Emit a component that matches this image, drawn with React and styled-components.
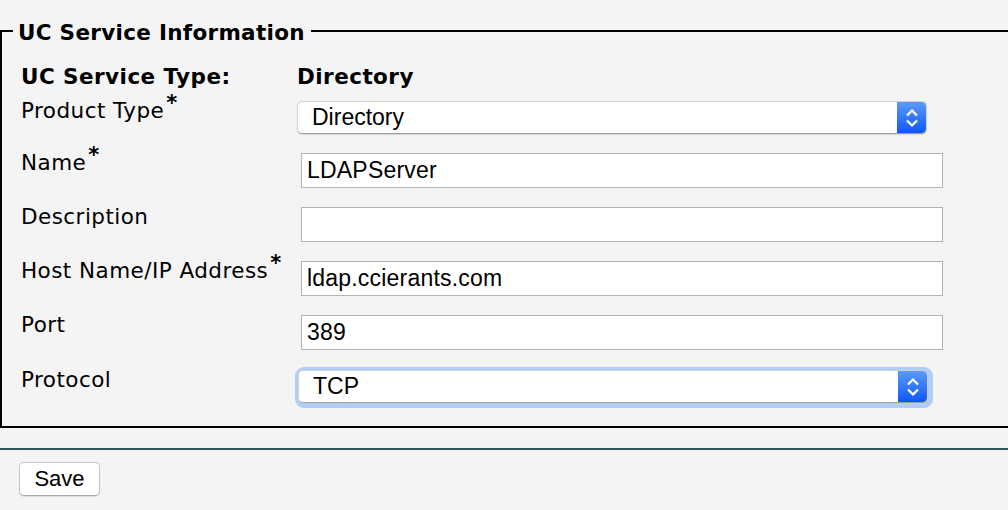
import React from 'react'
import styled, { createGlobalStyle } from 'styled-components'

const GlobalStyle = createGlobalStyle`
    html, body {
        margin: 0;
        padding: 0;
        background: #f4f4f4;
        overflow: hidden;
    }
    body {
        font-family: "DejaVu Sans", Verdana, sans-serif;
        color: #000;
    }
`

const Page = styled.div`
    width: 1008px;
    height: 510px;
    padding-top: 16px;
    box-sizing: border-box;
`

const Fieldset = styled.fieldset`
    margin: 0;
    padding: 21px 0 24px 0;
    border: 2px solid #000;
    border-right: none;
    min-width: 0;
`

const Legend = styled.legend`
    margin-left: 11px;
    padding: 4px 6px 0 5px;
    font-size: 21.5px;
    font-weight: bold;
    letter-spacing: 0.3px;
    line-height: 26px;
`

const Rows = styled.div`
    display: flex;
    flex-direction: column;
    padding-left: 19px;
`

const Row = styled.div`
    display: grid;
    grid-template-columns: 276px 1fr;
    align-items: start;
    height: ${p => p.$h}px;
`

const Label = styled.div`
    font-size: 21.5px;
    line-height: 20px;
    letter-spacing: 0.45px;
    font-weight: ${p => (p.$bold ? 'bold' : 'normal')};
    white-space: nowrap;
`

const Star = styled.span`
    position: relative;
    top: -8px;
    font-size: 21px;
    font-weight: bold;
    margin-left: 2px;
`

const TextInput = styled.div`
    margin-left: 4px;
    width: 642px;
    height: 35px;
    box-sizing: border-box;
    border: 1px solid #b3b3b3;
    background: #fff;
    padding: 0 5px;
    font-family: "Liberation Sans", Arial, sans-serif;
    font-size: 23px;
    letter-spacing: 0.2px;
    line-height: 33px;
`

const Select = styled.div`
    display: flex;
    width: 630px;
    height: 33px;
    box-sizing: border-box;
    border-radius: 5px;
    background: #fff;
    border: 1px solid #cfcfcf;
    border-bottom-color: #9d9d9d;
    box-shadow: ${p => (p.$focused ? '1px 1px 0 4px #b0cdf5' : '0 1px 1px rgba(0,0,0,0.12)')};
    margin-left: ${p => (p.$focused ? '1px' : '0')};
    overflow: hidden;
    font-family: "Liberation Sans", Arial, sans-serif;
    font-size: 23px;
`

const SelectValue = styled.div`
    flex: 1;
    padding-left: 14px;
    line-height: 31px;
`

const Stepper = styled.div`
    width: 29px;
    display: flex;
    align-items: center;
    justify-content: center;
    background: linear-gradient(#5b9bfb, #0f57f6);
    border-radius: 0 4px 4px 0;
`

const Divider = styled.div`
    margin-top: 20px;
    height: 2px;
    background: #2e5656;
`

const Footer = styled.div`
    padding: 12px 0 0 19px;
`

const Button = styled.button`
    width: 81px;
    height: 34px;
    border: 1px solid #c4c4c4;
    border-bottom-color: #a8a8a8;
    border-radius: 5px;
    background: #fff;
    box-shadow: 0 1px 1px rgba(0,0,0,0.1);
    font-family: "Liberation Sans", Arial, sans-serif;
    font-size: 22px;
    color: #000;
    padding: 0;
`

const Arrows = () => (
    <svg width="14" height="20" viewBox="0 0 14 20">
        <path d="M2 7.5 L7 2.5 L12 7.5" fill="none" stroke="#fff" strokeWidth="2.2" />
        <path d="M2 12.5 L7 17.5 L12 12.5" fill="none" stroke="#fff" strokeWidth="2.2" />
    </svg>
)

const Dropdown = ({ value, focused }) => (
    <Select $focused={focused}>
        <SelectValue>{value}</SelectValue>
        <Stepper><Arrows /></Stepper>
    </Select>
)

export default function App() {
    return (
        <Page>
            <GlobalStyle />
            <Fieldset>
                <Legend>UC Service Information</Legend>
                <Rows>
                    <Row $h={34}>
                        <Label $bold>UC Service Type:</Label>
                        <Label $bold>Directory</Label>
                    </Row>
                    <Row $h={52}>
                        <Label>Product Type<Star>*</Star></Label>
                        <Dropdown value="Directory" />
                    </Row>
                    <Row $h={54}>
                        <Label>Name<Star>*</Star></Label>
                        <TextInput>LDAPServer</TextInput>
                    </Row>
                    <Row $h={54}>
                        <Label>Description</Label>
                        <TextInput />
                    </Row>
                    <Row $h={54}>
                        <Label>Host Name/IP Address<Star>*</Star></Label>
                        <TextInput>ldap.ccierants.com</TextInput>
                    </Row>
                    <Row $h={55}>
                        <Label>Port</Label>
                        <TextInput>389</TextInput>
                    </Row>
                    <Row $h={32}>
                        <Label>Protocol</Label>
                        <Dropdown value="TCP" focused />
                    </Row>
                </Rows>
            </Fieldset>
            <Divider />
            <Footer>
                <Button>Save</Button>
            </Footer>
        </Page>
    )
}
